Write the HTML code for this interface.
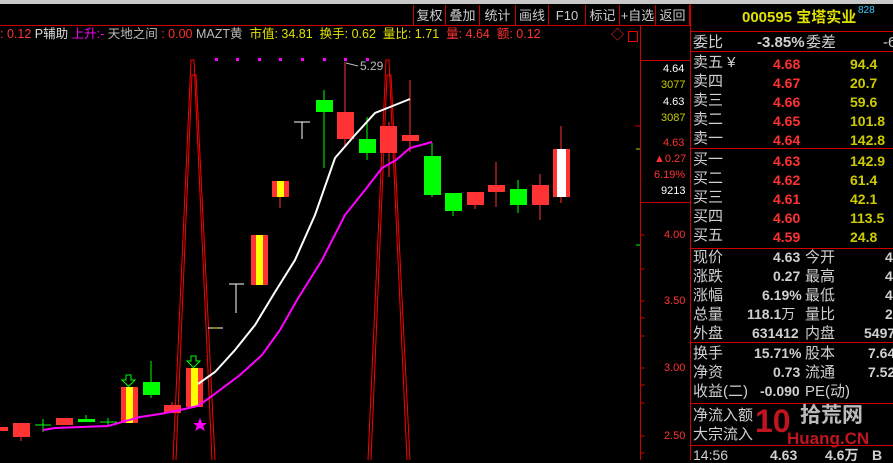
<!DOCTYPE html>
<html><head><meta charset="utf-8"><style>
*{margin:0;padding:0;box-sizing:border-box}
body{width:893px;height:460px;background:#000;overflow:hidden;position:relative;font-family:"Liberation Sans","Noto Sans CJK SC",sans-serif;}
.a{position:absolute;white-space:nowrap;line-height:1}
.btn{position:absolute;top:5px;height:21px;border-left:1px solid #c00;color:#ccc;font-size:13px;text-align:center;line-height:21px}
.r{color:#ff3232}.y{color:#e0e000}.g{color:#0f0}.w{color:#ddd}.m{color:#f0f}
.rp{position:absolute;left:693px;font-size:15px;line-height:1;color:#d0d0d0;white-space:nowrap}
.hl{position:absolute;left:690px;width:203px;height:1px;background:#c00}
</style></head><body>
<div style="position:absolute;left:0;top:0;width:893px;height:4px;background:#c8c8c8"></div>
<div style="position:absolute;left:0;top:25px;width:690px;height:1px;background:#c00"></div>
<div class="btn" style="left:413px;width:32px">复权</div>
<div class="btn" style="left:445px;width:34px">叠加</div>
<div class="btn" style="left:479px;width:36px">统计</div>
<div class="btn" style="left:515px;width:33px">画线</div>
<div class="btn" style="left:548px;width:37px">F10</div>
<div class="btn" style="left:585px;width:34px">标记</div>
<div class="btn" style="left:619px;width:36px">+自选</div>
<div class="btn" style="left:655px;width:35px;border-right:1px solid #c00">返回</div>
<div class="a" style="left:0;top:28px;font-size:12.5px"><span class="r">: 0.12</span> <span class="w">P辅助</span> <span class="m">上升:-</span> <span style="color:#bbb">天地之间</span> <span class="r">: 0.00</span> <span style="color:#bbb">MAZT黄</span> <span class="y">&nbsp;市值: 34.81&nbsp; 换手: 0.62&nbsp; 量比: 1.71</span> <span class="r">&nbsp;量: 4.64&nbsp; 额: 0.12</span></div>
<div class="a r" style="left:611px;top:28px;font-size:13px">◇</div>
<div style="position:absolute;left:628px;top:31px;width:10px;height:11px;border:1px solid #e00"></div>
<div style="position:absolute;left:640px;top:26px;width:1px;height:434px;background:#c00"></div>
<div style="position:absolute;left:690px;top:4px;width:1px;height:456px;background:#c00"></div>
<div style="position:absolute;left:640px;top:60px;width:50px;height:1px;background:#c00"></div>
<div style="position:absolute;left:640px;top:202px;width:50px;height:1px;background:#c00"></div>
<div class="a" style="left:663px;top:64px;font-size:11px;color:#fff">4.64</div>
<div class="a" style="left:661px;top:80px;font-size:11px;color:#cc0">3077</div>
<div class="a" style="left:663px;top:97px;font-size:11px;color:#fff">4.63</div>
<div class="a" style="left:661px;top:113px;font-size:11px;color:#cc0">3087</div>
<div class="a r" style="left:663px;top:138px;font-size:11px">4.63</div>
<div class="a r" style="left:654px;top:154px;font-size:11px">▲0.27</div>
<div class="a r" style="left:654px;top:170px;font-size:11px">6.19%</div>
<div class="a" style="left:661px;top:186px;font-size:11px;color:#fff">9213</div>
<div class="a r" style="left:664px;top:230px;font-size:11px">4.00</div>
<div class="a r" style="left:664px;top:296px;font-size:11px">3.50</div>
<div class="a r" style="left:664px;top:363px;font-size:11px">3.00</div>
<div class="a r" style="left:664px;top:431px;font-size:11px">2.50</div>
<svg style="position:absolute;left:0;top:0" width="690" height="460">
<g stroke="#c00" stroke-width="1">
<line x1="640" y1="269" x2="645" y2="269"/><line x1="640" y1="318" x2="645" y2="318"/><line x1="640" y1="336" x2="645" y2="336"/><line x1="640" y1="385" x2="645" y2="385"/><line x1="640" y1="403" x2="645" y2="403"/><line x1="640" y1="453" x2="645" y2="453"/><line x1="640" y1="301" x2="645" y2="301"/><line x1="640" y1="368" x2="645" y2="368"/><line x1="640" y1="436" x2="645" y2="436"/><line x1="640" y1="235" x2="645" y2="235"/><line x1="635" y1="126" x2="640" y2="126"/>
</g>
<line x1="636" y1="149" x2="640" y2="149" stroke="#cc0"/><line x1="636" y1="245" x2="640" y2="245" stroke="#0f0"/>
<g stroke="#f00" stroke-width="1" fill="none">
<polyline points="173,460 191,60 194,60 212,460"/><polyline points="176,460 192,75 196,75 215,460"/>
<polyline points="368,460 386,60 389,60 407,460"/><polyline points="371,460 387,75 391,75 410,460"/>
</g>
<g fill="#f0f"><rect x="215" y="58" width="3" height="3"/><rect x="236" y="58" width="3" height="3"/><rect x="258" y="58" width="3" height="3"/><rect x="279" y="58" width="3" height="3"/><rect x="301" y="58" width="3" height="3"/><rect x="323" y="58" width="3" height="3"/><rect x="344" y="58" width="3" height="3"/><rect x="366" y="58" width="3" height="3"/></g>
<text x="360" y="70" fill="#bbb" font-size="12" font-family="Liberation Sans">5.29</text>
<line x1="346" y1="63" x2="358" y2="66" stroke="#bbb"/>
<g stroke-width="1">
<rect x="0" y="427" width="8" height="4" fill="#f33"/>
<line x1="21" y1="437" x2="21" y2="441" stroke="#f33"/><rect x="13" y="423" width="17" height="14" fill="#f33"/>
<line x1="35" y1="425" x2="51" y2="425" stroke="#0f0"/><line x1="43" y1="419" x2="43" y2="432" stroke="#0f0"/>
<rect x="56" y="418" width="17" height="7" fill="#f33"/>
<line x1="86" y1="415" x2="86" y2="420" stroke="#0f0"/><rect x="78" y="419" width="17" height="3" fill="#0f0"/>
<line x1="100" y1="422" x2="117" y2="422" stroke="#0f0"/><line x1="108" y1="418" x2="108" y2="425" stroke="#0f0"/>
<rect x="121" y="387" width="17" height="36" fill="#f33"/><rect x="126" y="387" width="7" height="36" fill="#ff0"/>
<line x1="151" y1="361" x2="151" y2="398" stroke="#0f0"/><rect x="143" y="382" width="17" height="13" fill="#0f0"/>
<rect x="164" y="405" width="17" height="8" fill="#f33"/><line x1="172" y1="402" x2="172" y2="405" stroke="#f33"/>
<rect x="186" y="368" width="17" height="39" fill="#f33"/><rect x="191" y="368" width="7" height="39" fill="#ff0"/>
<line x1="208" y1="328" x2="223" y2="328" stroke="#fff"/><line x1="213" y1="328" x2="218" y2="328" stroke="#ff0"/>
<line x1="229" y1="284" x2="244" y2="284" stroke="#fff"/><line x1="236" y1="284" x2="236" y2="313" stroke="#fff"/>
<rect x="251" y="235" width="17" height="50" fill="#f33"/><rect x="256" y="235" width="7" height="50" fill="#ff0"/>
<line x1="280" y1="197" x2="280" y2="208" stroke="#f33"/><rect x="272" y="181" width="17" height="16" fill="#f33"/><rect x="277" y="181" width="7" height="16" fill="#ff0"/>
<line x1="294" y1="122" x2="310" y2="122" stroke="#fff"/><line x1="302" y1="122" x2="302" y2="139" stroke="#fff"/>
<line x1="324" y1="90" x2="324" y2="168" stroke="#0f0"/><rect x="316" y="100" width="17" height="12" fill="#0f0"/>
<line x1="345" y1="62" x2="345" y2="146" stroke="#f33"/><rect x="337" y="112" width="17" height="27" fill="#f33"/>
<line x1="367" y1="117" x2="367" y2="160" stroke="#0f0"/><rect x="359" y="139" width="17" height="14" fill="#0f0"/>
<line x1="389" y1="122" x2="389" y2="177" stroke="#f33"/><rect x="380" y="126" width="17" height="27" fill="#f33"/>
<line x1="410" y1="80" x2="410" y2="152" stroke="#f33"/><rect x="402" y="135" width="17" height="6" fill="#f33"/>
<line x1="432" y1="143" x2="432" y2="197" stroke="#0f0"/><rect x="424" y="156" width="17" height="39" fill="#0f0"/>
<line x1="453" y1="205" x2="453" y2="216" stroke="#0f0"/><rect x="445" y="193" width="17" height="18" fill="#0f0"/>
<line x1="475" y1="205" x2="475" y2="209" stroke="#f33"/><rect x="467" y="192" width="17" height="13" fill="#f33"/>
<line x1="496" y1="162" x2="496" y2="207" stroke="#f33"/><rect x="488" y="185" width="17" height="7" fill="#f33"/>
<line x1="518" y1="180" x2="518" y2="213" stroke="#0f0"/><rect x="510" y="189" width="17" height="16" fill="#0f0"/>
<line x1="540" y1="174" x2="540" y2="220" stroke="#f33"/><rect x="532" y="185" width="17" height="20" fill="#f33"/>
<line x1="561" y1="126" x2="561" y2="203" stroke="#f33"/><rect x="553" y="149" width="17" height="48" fill="#f33"/><rect x="557" y="149" width="9" height="48" fill="#fff"/>
</g>
<polyline fill="none" stroke="#fff" stroke-width="2" points="198,384 215,372 235,350 255,325 275,292 295,260 315,215 335,158 355,135 375,113 390,107 410,99"/>
<polyline fill="none" stroke="#f0f" stroke-width="2" points="43,430 55,428 108,426 115,424 140,417 160,414 180,410 198,406 212,396 240,375 262,355 280,330 297,300 322,260 345,215 365,190 382,168 396,160 410,148 432,142"/>
<g fill="none" stroke="#0f0"><path d="M126,375h5v5h4l-6.5,6.5l-6.5,-6.5h4z"/><path d="M191,356h5v5h4l-6.5,6.5l-6.5,-6.5h4z"/></g>
<polygon fill="#f0f" points="200,418 202,423 207,423 203,426 205,431 200,428 195,431 197,426 193,423 198,423"/>
</svg>
<div class="a y" style="left:742px;top:10px;font-size:15px;font-weight:bold">000595 宝塔实业</div>
<div class="a" style="left:858px;top:6px;font-size:10px;color:#3cf">828</div>
<div class="hl" style="top:31px"></div>
<div class="rp" style="top:35px">委比</div><div class="rp g" style="left:757px;top:35px;font-weight:bold">-3.85%</div><div class="rp" style="left:806px;top:35px">委差</div><div class="rp g" style="left:883px;top:35px">-6</div>
<div class="hl" style="top:51px"></div>
<div class="rp" style="top:55px">卖五 ¥</div><div class="rp" style="top:74px">卖四</div><div class="rp" style="top:93px">卖三</div><div class="rp" style="top:112px">卖二</div><div class="rp" style="top:131px">卖一</div>
<div class="hl" style="top:148px"></div>
<div class="rp" style="top:152px">买一</div><div class="rp" style="top:171px">买二</div><div class="rp" style="top:190px">买三</div><div class="rp" style="top:209px">买四</div><div class="rp" style="top:228px">买五</div>
<div style="position:absolute;left:773px;top:55px;font-size:14px;font-weight:bold;line-height:19px;color:#ff3232">4.68<br>4.67<br>4.66<br>4.65<br>4.64<br><span style="display:block;height:2px"></span>4.63<br>4.62<br>4.61<br>4.60<br>4.59</div>
<div style="position:absolute;left:850px;top:55px;width:60px;font-size:14px;font-weight:bold;line-height:19px;color:#cc0;text-align:left">94.4<br>20.7<br>59.6<br>101.8<br>142.8<br><span style="display:block;height:2px"></span>142.9<br>61.4<br>42.1<br>113.5<br>24.8</div>
<div class="hl" style="top:248px"></div>
<div class="rp" style="top:250px">现价</div><div class="rp" style="top:269px">涨跌</div><div class="rp" style="top:288px">涨幅</div><div class="rp" style="top:307px">总量</div><div class="rp" style="top:326px">外盘</div>
<div class="rp" style="left:805px;top:250px">今开</div><div class="rp" style="left:805px;top:269px">最高</div><div class="rp" style="left:805px;top:288px">最低</div><div class="rp" style="left:805px;top:307px">量比</div><div class="rp" style="left:805px;top:326px">内盘</div>
<div class="rp r" style="left:773px;top:250px;font-size:14px;font-weight:bold">4.63</div>
<div class="rp r" style="left:773px;top:269px;font-size:14px;font-weight:bold">0.27</div>
<div class="rp r" style="left:762px;top:288px;font-size:14px;font-weight:bold">6.19%</div>
<div class="rp y" style="left:747px;top:307px;font-size:14px;font-weight:bold">118.1<span style="font-weight:normal">万</span></div>
<div class="rp r" style="left:752px;top:326px;font-size:14px;font-weight:bold">631412</div>
<div class="rp g" style="left:885px;top:250px;font-size:14px;font-weight:bold">4</div>
<div class="rp r" style="left:885px;top:269px;font-size:14px;font-weight:bold">4</div>
<div class="rp g" style="left:885px;top:288px;font-size:14px;font-weight:bold">4</div>
<div class="rp r" style="left:885px;top:307px;font-size:14px;font-weight:bold">2</div>
<div class="rp g" style="left:864px;top:326px;font-size:14px;font-weight:bold">5497</div>
<div class="hl" style="top:342px"></div>
<div class="rp" style="top:346px">换手</div><div class="rp" style="top:365px">净资</div><div class="rp" style="top:384px">收益(二)</div>
<div class="rp" style="left:754px;top:346px;font-size:14px;font-weight:bold">15.71%</div>
<div class="rp" style="left:773px;top:365px;font-size:14px;font-weight:bold">0.73</div>
<div class="rp" style="left:760px;top:384px;font-size:14px;font-weight:bold">-0.090</div>
<div class="rp" style="left:805px;top:346px">股本</div><div class="rp" style="left:805px;top:365px">流通</div><div class="rp" style="left:805px;top:384px">PE(动)</div>
<div class="rp" style="left:868px;top:346px;font-size:14px;font-weight:bold">7.64</div>
<div class="rp" style="left:868px;top:365px;font-size:14px;font-weight:bold">7.52</div>
<div class="hl" style="top:403px"></div>
<div class="rp" style="top:408px">净流入额</div><div class="rp" style="top:427px">大宗流入</div>
<div class="a" style="left:755px;top:405px;font-size:32px;font-weight:bold;color:#c0141e">10</div>
<div class="a" style="left:800px;top:405px;font-size:21px;font-weight:bold;color:#bbb">拾荒网</div>
<div class="a" style="left:787px;top:430px;font-size:17px;font-weight:bold;color:#c0141e">Huang.CN</div>
<div class="hl" style="top:445px"></div>
<div class="rp" style="top:448px;font-size:14px">14:56</div>
<div class="rp r" style="left:770px;top:448px;font-size:14px;font-weight:bold">4.63</div>
<div class="rp y" style="left:825px;top:448px;font-size:14px;font-weight:bold">4.6万</div>
<div class="rp r" style="left:872px;top:448px;font-size:14px;font-weight:bold">B</div>
</body></html>
